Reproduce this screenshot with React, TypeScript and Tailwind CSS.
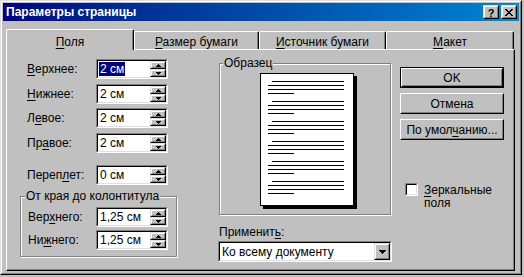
import React from "react";

const FONT = "font-['Liberation_Sans',Arial,sans-serif]";

function Tri({ dir }: { dir: "up" | "down" }) {
  const rows = dir === "up" ? [0, 1, 2] : [2, 1, 0];
  return (
    <svg width="5" height="3" viewBox="0 0 5 3" shapeRendering="crispEdges">
      {rows.map((r, i) => (
        <rect key={i} x={2 - r} y={i} width={r * 2 + 1} height={1} fill="#000" />
      ))}
    </svg>
  );
}

function BigTri() {
  return (
    <svg width="7" height="4" viewBox="0 0 7 4" shapeRendering="crispEdges">
      <rect x="0" y="0" width="7" height="1" fill="#000" />
      <rect x="1" y="1" width="5" height="1" fill="#000" />
      <rect x="2" y="2" width="3" height="1" fill="#000" />
      <rect x="3" y="3" width="1" height="1" fill="#000" />
    </svg>
  );
}

function RaisedBox({ className = "", children }: { className?: string; children?: React.ReactNode }) {
  return (
    <div className={`border border-t-[#dfdfdf] border-l-[#dfdfdf] border-r-black border-b-black ${className}`}>
      <div className="w-full h-full border border-t-white border-l-white border-r-[#808080] border-b-[#808080] bg-[#c0c0c0] flex items-center justify-center">
        {children}
      </div>
    </div>
  );
}

function Sunken({ className = "", children }: { className?: string; children?: React.ReactNode }) {
  return (
    <div className={`border border-t-[#808080] border-l-[#808080] border-r-white border-b-white ${className}`}>
      <div className="w-full h-full border border-t-black border-l-black border-r-[#dfdfdf] border-b-[#dfdfdf] bg-white flex">
        {children}
      </div>
    </div>
  );
}

function SpinField({ value, selected }: { value: string; selected?: boolean }) {
  return (
    <Sunken className="w-[72px] h-[20px]">
      <div className="flex-1 flex items-center pl-[1px]">
        {selected ? (
          <span className="bg-[#000080] text-white leading-[14px] pl-[1px] pr-[1px]">{value}</span>
        ) : (
          <span className="leading-[14px] pl-[1px]">{value}</span>
        )}
      </div>
      <div className="flex flex-col w-[16px] h-full">
        <RaisedBox className="w-[16px] h-[8px]">
          <Tri dir="up" />
        </RaisedBox>
        <RaisedBox className="w-[16px] h-[8px]">
          <Tri dir="down" />
        </RaisedBox>
      </div>
    </Sunken>
  );
}

function Row({ label, value, selected, className = "", lw = "w-[76px]" }: { label: React.ReactNode; value: string; selected?: boolean; className?: string; lw?: string }) {
  return (
    <div className={`flex items-center h-[20px] ${className}`}>
      <div className={`${lw} pl-[7px] leading-[14px]`}>{label}</div>
      <SpinField value={value} selected={selected} />
    </div>
  );
}

function U({ children }: { children: React.ReactNode }) {
  return <span className="underline underline-offset-[2px] decoration-[1px]">{children}</span>;
}

function Button({ children, def, className = "" }: { children: React.ReactNode; def?: boolean; className?: string }) {
  if (def) {
    return (
      <div className={`border border-black ${className}`}>
        <div className="w-full h-full border border-t-white border-l-white border-r-black border-b-black">
          <div className="w-full h-full border border-t-[#c0c0c0] border-l-[#c0c0c0] border-r-[#808080] border-b-[#808080] flex items-center justify-center leading-[14px]">
            {children}
          </div>
        </div>
      </div>
    );
  }
  return (
    <div className={`border border-t-white border-l-white border-r-black border-b-black ${className}`}>
      <div className="w-full h-full border border-t-[#c0c0c0] border-l-[#c0c0c0] border-r-[#808080] border-b-[#808080] flex items-center justify-center leading-[14px]">
        {children}
      </div>
    </div>
  );
}

function PagePreview() {
  const groups = [0, 1, 2, 3, 4, 5];
  return (
    <div className="w-[94px] h-[133px] bg-white border border-black shadow-[3px_3px_0_#000] ml-[40px] mt-[9px] flex flex-col gap-[7px] pt-[7px] pl-[7px]">
      {groups.map((g) => (
        <div key={g} className="flex flex-col gap-[3px]">
          <div className="h-px w-[72px] bg-black ml-[4px]" />
          <div className="h-px w-[76px] bg-black" />
          <div className="h-px w-[76px] bg-black" />
          <div className="h-px w-[26px] bg-black" />
        </div>
      ))}
    </div>
  );
}

function Tab({ children, active, w }: { children: React.ReactNode; active?: boolean; w: string }) {
  if (active) {
    return (
      <div className={`${w} h-[21px] -mb-px relative z-10 bg-[#c0c0c0] border-l border-t border-l-white border-t-white border-r border-r-black rounded-tl-[2px] rounded-tr-[2px] shadow-[inset_-1px_0_#808080] flex justify-center pt-[5px] leading-[14px]`}>
        {children}
      </div>
    );
  }
  return (
    <div className={`${w} h-[18px] bg-[#c0c0c0] border-l border-t border-l-white border-t-white border-r border-r-black rounded-tl-[2px] rounded-tr-[2px] shadow-[inset_-1px_0_#808080] flex justify-center pt-[3px] leading-[14px]`}>
      {children}
    </div>
  );
}

export default function App() {
  return (
    <div className={`w-[524px] h-[277px] bg-[#c0c0c0] ${FONT} text-[12px] text-black`}>
      <div className="w-[522px] h-[275px] border border-t-[#dfdfdf] border-l-[#dfdfdf] border-r-black border-b-black">
        <div className="w-full h-full border border-t-white border-l-white border-r-[#808080] border-b-[#808080] p-px flex flex-col">
          {/* Title bar */}
          <div className="h-[18px] bg-gradient-to-r from-[#000080] to-[#1084d0] flex items-start">
            <div className="flex-1 pl-[3px] pt-[2px] text-white font-bold leading-[14px] text-[12px]">Параметры страницы</div>
            <div className="flex pt-[2px] pr-[2px] gap-[2px]">
              <RaisedBox className="w-[16px] h-[14px]">
                <span className="font-bold text-[11px] leading-[10px] pt-[1px]">?</span>
              </RaisedBox>
              <RaisedBox className="w-[16px] h-[14px]">
                <svg width="8" height="7" viewBox="0 0 8 7" shapeRendering="crispEdges">
                  {[0, 1, 2, 3, 4, 5, 6].map((i) => (
                    <g key={i}>
                      <rect x={i} y={i} width={2} height={1} fill="#000" />
                      <rect x={6 - i} y={i} width={2} height={1} fill="#000" />
                    </g>
                  ))}
                </svg>
              </RaisedBox>
            </div>
          </div>

          {/* Client */}
          <div className="flex-1 pl-[3px] pt-[8px] flex flex-col">
            <div className="flex items-end h-[20px]">
              <Tab active w="w-[128px]">
                <span><U>П</U>оля</span>
              </Tab>
              <Tab w="w-[125px]">
                <span><U>Р</U>азмер бумаги</span>
              </Tab>
              <Tab w="w-[127px]">
                <span><U>И</U>сточник бумаги</span>
              </Tab>
              <Tab w="w-[128px]">
                <span><U>М</U>акет</span>
              </Tab>
            </div>

            {/* Panel */}
            <div className="w-[509px] h-[222px] border border-t-white border-l-white border-r-black border-b-black shadow-[inset_-1px_-1px_#808080] flex pl-[13px]">
              {/* Left column */}
              <div className="w-[158px] flex flex-col pt-[9px]">
                <Row label={<span><U>В</U>ерхнее:</span>} value="2 см" selected />
                <Row className="mt-[5px]" label={<span><U>Н</U>ижнее:</span>} value="2 см" />
                <Row className="mt-[4px]" label={<span>Л<U>е</U>вое:</span>} value="2 см" />
                <Row className="mt-[5px]" label={<span>Пр<U>а</U>вое:</span>} value="2 см" />
                <Row className="mt-[12px]" label={<span>Переп<U>л</U>ет:</span>} value="0 см" />
                <div className="relative mt-[11px] w-[157px] h-[61px] border border-[#808080] shadow-[inset_1px_1px_#fff,1px_1px_0_#fff] pt-[10px]">
                  <span className="absolute left-[4px] -top-[8px] bg-[#c0c0c0] px-px leading-[14px]">От края до колонтитула</span>
                  <Row lw="w-[75px]" label={<span>Вер<U>х</U>него:</span>} value="1,25 см" />
                  <Row lw="w-[75px]" className="mt-[3px]" label={<span>Ни<U>ж</U>него:</span>} value="1,25 см" />
                </div>
              </div>

              {/* Middle column */}
              <div className="w-[174px] ml-[40px] flex flex-col pt-[13px]">
                <div className="relative ml-px w-[172px] h-[152px] border border-[#808080] shadow-[inset_1px_1px_#fff,1px_1px_0_#fff]">
                  <span className="absolute left-[3px] -top-[8px] bg-[#c0c0c0] px-px leading-[14px]">Образец</span>
                  <PagePreview />
                </div>
                <div className="mt-[10px] ml-px leading-[14px]">
                  Применит<U>ь</U>:
                </div>
                <Sunken className="mt-[2px] w-[174px] h-[21px]">
                  <div className="flex-1 flex items-center pl-[2px] leading-[14px]">Ко всему документу</div>
                  <RaisedBox className="w-[16px] h-full">
                    <BigTri />
                  </RaisedBox>
                </Sunken>
              </div>

              {/* Right column */}
              <div className="w-[104px] ml-[8px] flex flex-col pt-[17px]">
                <Button def className="w-[104px] h-[21px]">OK</Button>
                <Button className="w-[104px] h-[21px] mt-[5px]">Отмена</Button>
                <Button className="w-[104px] h-[21px] mt-[5px]">
                  <span>По умол<U>ч</U>анию...</span>
                </Button>
                <div className="flex items-start mt-[43px] ml-[5px]">
                  <div className="w-[13px] h-[13px] border border-t-[#808080] border-l-[#808080] border-r-white border-b-white">
                    <div className="w-full h-full border border-t-black border-l-black border-r-[#dfdfdf] border-b-[#dfdfdf] bg-white" />
                  </div>
                  <div className="ml-[6px] leading-[13px] pt-px">
                    <U>З</U>еркальные<br />поля
                  </div>
                </div>
              </div>
            </div>
          </div>
        </div>
      </div>
    </div>
  );
}
